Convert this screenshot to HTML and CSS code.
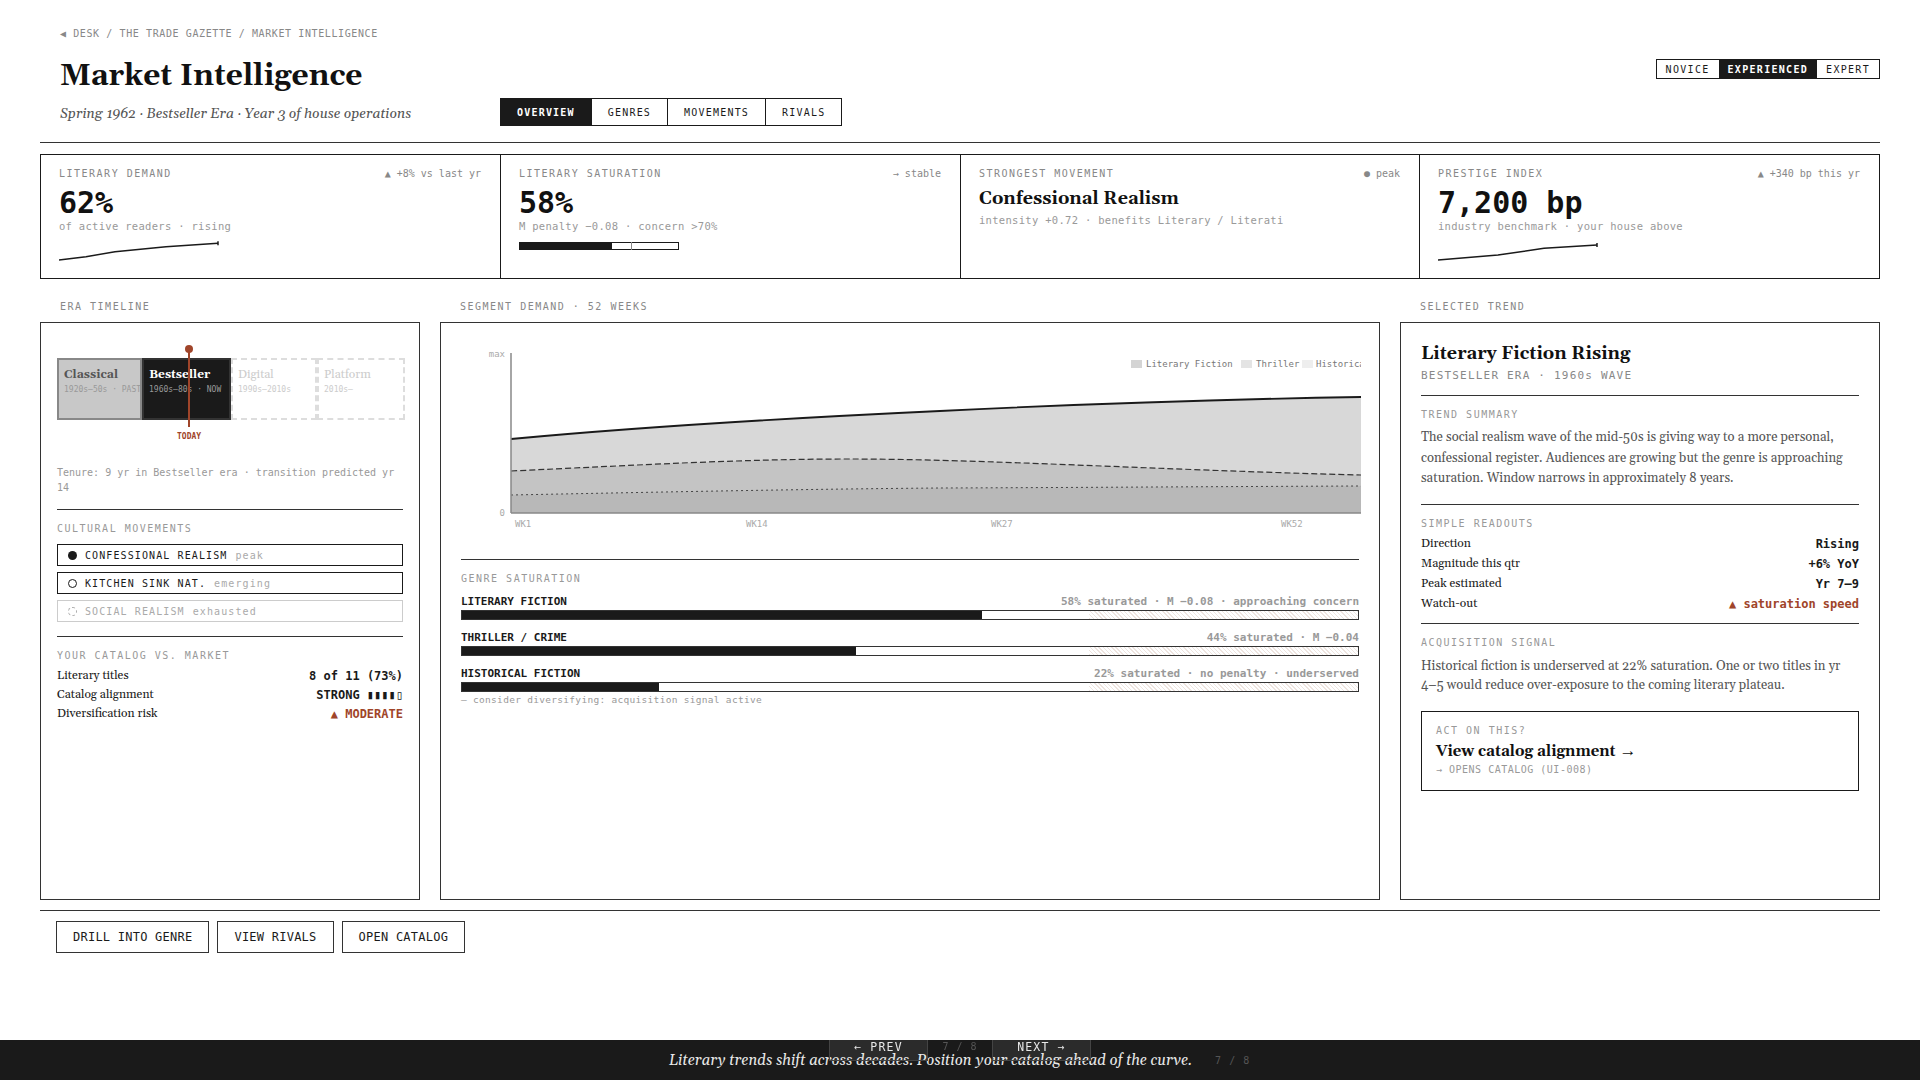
FILE: index.html
```html
<!DOCTYPE html>
<html lang="en">
<head>
<meta charset="utf-8">
<title>Market Intelligence</title>
<link rel="stylesheet" href="styles.css">
</head>
<body>
<div class="app">
  <header class="head">
    <div class="crumb">◀ DESK / THE TRADE GAZETTE / MARKET INTELLIGENCE</div>
    <div class="head-row">
      <div class="head-main">
        <h1 class="title">Market Intelligence</h1>
        <div class="sub-row">
          <div class="subtitle">Spring 1962 · Bestseller Era · Year 3 of house operations</div>
          <nav class="tabs">
            <span class="tab tab-on">OVERVIEW</span>
            <span class="tab">GENRES</span>
            <span class="tab">MOVEMENTS</span>
            <span class="tab">RIVALS</span>
          </nav>
        </div>
      </div>
      <div class="level">
        <span class="lvl">NOVICE</span>
        <span class="lvl lvl-on">EXPERIENCED</span>
        <span class="lvl">EXPERT</span>
      </div>
    </div>
  </header>

  <section class="kpis">
    <div class="kpi">
      <div class="kpi-top"><span class="kpi-label">LITERARY DEMAND</span><span class="kpi-delta">▲ +8% vs last yr</span></div>
      <div class="kpi-val">62%</div>
      <div class="kpi-sub">of active readers · rising</div>
      <svg class="spark" width="162" height="20" viewBox="0 0 162 20"><polyline points="0,19 27,15.7 56,10.7 107,5.7 159,2.3" fill="none" stroke="#1a1a1a" stroke-width="1.5"/><line x1="159" y1="0.3" x2="159" y2="4.3" stroke="#1a1a1a" stroke-width="1.5"/></svg>
    </div>
    <div class="kpi">
      <div class="kpi-top"><span class="kpi-label">LITERARY SATURATION</span><span class="kpi-delta">→ stable</span></div>
      <div class="kpi-val">58%</div>
      <div class="kpi-sub">M penalty −0.08 · concern &gt;70%</div>
      <div class="minibar"><div class="minibar-fill"></div><div class="minibar-tick"></div></div>
    </div>
    <div class="kpi">
      <div class="kpi-top"><span class="kpi-label">STRONGEST MOVEMENT</span><span class="kpi-delta">● peak</span></div>
      <div class="kpi-name">Confessional Realism</div>
      <div class="kpi-sub kpi-sub-name">intensity +0.72 · benefits Literary / Literati</div>
    </div>
    <div class="kpi">
      <div class="kpi-top"><span class="kpi-label">PRESTIGE INDEX</span><span class="kpi-delta">▲ +340 bp this yr</span></div>
      <div class="kpi-val">7,200 bp</div>
      <div class="kpi-sub">industry benchmark · your house above</div>
      <svg class="spark" width="162" height="20" viewBox="0 0 162 20"><polyline points="0,19 60,14 106,7.3 159,4" fill="none" stroke="#1a1a1a" stroke-width="1.5"/><line x1="159" y1="2" x2="159" y2="6" stroke="#1a1a1a" stroke-width="1.5"/></svg>
    </div>
  </section>

  <main class="cols">
    <div class="col">
      <div class="col-label">ERA TIMELINE</div>
      <div class="panel panel-left">
        <div class="eras">
          <div class="era era-past"><div class="era-name">Classical</div><div class="era-date">1920s–50s · PAST</div></div>
          <div class="era era-now"><div class="era-name">Bestseller</div><div class="era-date">1960s–80s · NOW</div></div>
          <div class="era era-next era-digital"><div class="era-name">Digital</div><div class="era-date">1990s–2010s</div></div>
          <div class="era era-next era-platform"><div class="era-name">Platform</div><div class="era-date">2010s–</div></div>
          <div class="today"><span class="today-dot"></span><span class="today-line"></span><span class="today-text">TODAY</span></div>
        </div>
        <div class="tenure">Tenure: 9 yr in Bestseller era · transition predicted yr 14</div>
        <div class="rule rule-a"></div>
        <div class="sec-label">CULTURAL MOVEMENTS</div>
        <div class="chips">
          <div class="chip"><span class="dot dot-full"></span><span class="chip-name">CONFESSIONAL REALISM</span><span class="chip-state">peak</span></div>
          <div class="chip"><span class="dot dot-open"></span><span class="chip-name">KITCHEN SINK NAT.</span><span class="chip-state">emerging</span></div>
          <div class="chip chip-dim"><span class="dot dot-dash"></span><span class="chip-name">SOCIAL REALISM</span><span class="chip-state">exhausted</span></div>
        </div>
        <div class="rule rule-b"></div>
        <div class="sec-label">YOUR CATALOG VS. MARKET</div>
        <div class="rows rows-left">
          <div class="row"><span class="row-key">Literary titles</span><span class="row-val">8 of 11 (73%)</span></div>
          <div class="row"><span class="row-key">Catalog alignment</span><span class="row-val">STRONG ▮▮▮▮▯</span></div>
          <div class="row"><span class="row-key">Diversification risk</span><span class="row-val row-warn">▲ MODERATE</span></div>
        </div>
      </div>
    </div>

    <div class="col">
      <div class="col-label">SEGMENT DEMAND · 52 WEEKS</div>
      <div class="panel panel-mid">
        <svg class="chart" width="900" height="200" viewBox="0 0 900 200">
          <path d="M50,96 C200,82 350,74 479,68 C620,61 770,56 900,54 L900,170 L50,170 Z" fill="#d8d8d8"/>
          <path d="M50,128 C180,122 280,116 389,116 C520,116 700,127 900,132 L900,170 L50,170 Z" fill="#c4c4c4"/>
          <path d="M50,152 C200,149 350,146 479,145 C620,144.5 770,143.5 900,143 L900,170 L50,170 Z" fill="#b8b8b8"/>
          <path d="M50,96 C200,82 350,74 479,68 C620,61 770,56 900,54" fill="none" stroke="#1a1a1a" stroke-width="1.8"/>
          <path d="M50,128 C180,122 280,116 389,116 C520,116 700,127 900,132" fill="none" stroke="#333" stroke-width="1.2" stroke-dasharray="6 3"/>
          <path d="M50,152 C200,149 350,146 479,145 C620,144.5 770,143.5 900,143" fill="none" stroke="#444" stroke-width="1" stroke-dasharray="2 3"/>
          <line x1="50" y1="10" x2="50" y2="170" stroke="#888" stroke-width="1.5"/>
          <line x1="50" y1="170" x2="900" y2="170" stroke="#888" stroke-width="1.5"/>
          <text class="ct ct-end" x="44" y="14">max</text>
          <text class="ct ct-end" x="44" y="173">0</text>
          <text class="ct" x="54" y="184">WK1</text>
          <text class="ct" x="285" y="184">WK14</text>
          <text class="ct" x="530" y="184">WK27</text>
          <text class="ct" x="820" y="184">WK52</text>
          <rect x="670" y="17" width="11" height="8" fill="#d4d4d4"/>
          <text class="cl" x="685" y="24">Literary Fiction</text>
          <rect x="780" y="17" width="11" height="8" fill="#e4e4e4"/>
          <text class="cl" x="795" y="24">Thriller</text>
          <rect x="841" y="17" width="11" height="8" fill="#eeeeee"/>
          <text class="cl" x="855" y="24">Historical</text>
        </svg>
        <div class="rule rule-c"></div>
        <div class="sec-label sec-genre">GENRE SATURATION</div>
        <div class="genre">
          <div class="genre-top"><span class="genre-name">LITERARY FICTION</span><span class="genre-note">58% saturated · M −0.08 · approaching concern</span></div>
          <div class="gbar"><div class="gbar-hatch"></div><div class="gbar-fill" style="width:58%"></div></div>
        </div>
        <div class="genre">
          <div class="genre-top"><span class="genre-name">THRILLER / CRIME</span><span class="genre-note">44% saturated · M −0.04</span></div>
          <div class="gbar"><div class="gbar-hatch"></div><div class="gbar-fill" style="width:44%"></div></div>
        </div>
        <div class="genre">
          <div class="genre-top"><span class="genre-name">HISTORICAL FICTION</span><span class="genre-note">22% saturated · no penalty · underserved</span></div>
          <div class="gbar"><div class="gbar-hatch"></div><div class="gbar-fill" style="width:22%"></div></div>
        </div>
        <div class="genre-foot">— consider diversifying: acquisition signal active</div>
      </div>
    </div>

    <div class="col">
      <div class="col-label">SELECTED TREND</div>
      <div class="panel panel-right">
        <h2 class="trend-title">Literary Fiction Rising</h2>
        <div class="trend-sub">BESTSELLER ERA · 1960s WAVE</div>
        <div class="rule rule-d"></div>
        <div class="sec-label">TREND SUMMARY</div>
        <p class="para para-a">The social realism wave of the mid-50s is giving way to a more personal, confessional register. Audiences are growing but the genre is approaching saturation. Window narrows in approximately 8 years.</p>
        <div class="rule rule-e"></div>
        <div class="sec-label">SIMPLE READOUTS</div>
        <div class="rows rows-right">
          <div class="row"><span class="row-key">Direction</span><span class="row-val">Rising</span></div>
          <div class="row"><span class="row-key">Magnitude this qtr</span><span class="row-val">+6% YoY</span></div>
          <div class="row"><span class="row-key">Peak estimated</span><span class="row-val">Yr 7–9</span></div>
          <div class="row"><span class="row-key">Watch-out</span><span class="row-val row-warn">▲ saturation speed</span></div>
        </div>
        <div class="rule rule-f"></div>
        <div class="sec-label">ACQUISITION SIGNAL</div>
        <p class="para para-b">Historical fiction is underserved at 22% saturation. One or two titles in yr 4–5 would reduce over-exposure to the coming literary plateau.</p>
        <div class="cta">
          <div class="cta-kicker">ACT ON THIS?</div>
          <div class="cta-main">View catalog alignment <span class="cta-arrow">→</span></div>
          <div class="cta-sub">→ OPENS CATALOG (UI-008)</div>
        </div>
      </div>
    </div>
  </main>

  <div class="actions">
    <span class="btn">DRILL INTO GENRE</span>
    <span class="btn">VIEW RIVALS</span>
    <span class="btn">OPEN CATALOG</span>
  </div>
</div>

<footer class="foot">
  <span class="foot-text">Literary trends shift across decades. Position your catalog ahead of the curve.</span>
  <span class="foot-count">7 / 8</span>
</footer>
<div class="pager">
  <span class="pg">← PREV</span>
  <span class="pg-count">7 / 8</span>
  <span class="pg">NEXT →</span>
</div>
</body>
</html>
```
FILE: styles.css
```css
* { box-sizing: border-box; margin: 0; padding: 0; }
html, body { width: 1920px; height: 1080px; overflow: hidden; background: #fff; }
body { font-family: "DejaVu Sans Mono", monospace; color: #1a1a1a; }
.app { padding: 0 40px; }

.head { padding: 28px 0 0 20px; height: 143px; border-bottom: 1px solid #333; }
.crumb { font-size: 10px; line-height: 12px; letter-spacing: 0.6px; color: #888; }
.head-row { display: flex; justify-content: space-between; }
.head-main { padding-top: 16px; }
.title { font-family: Georgia, Gelasio, "Liberation Serif", serif; font-size: 30px; line-height: 40px; font-weight: 700; color: #111; }
.sub-row { display: flex; align-items: center; margin-top: 2px; }
.subtitle { width: 440px; padding-top: 4px; font-family: Georgia, Gelasio, "Liberation Serif", serif; font-style: italic; font-size: 14px; color: #555; }
.tabs { display: flex; border: 1px solid #1a1a1a; height: 28px; }
.tab { display: flex; align-items: center; padding: 0 16px; font-size: 10px; letter-spacing: 1.2px; border-left: 1px solid #1a1a1a; }
.tab:first-child { border-left: 0; }
.tab-on { background: #1a1a1a; color: #fff; font-weight: 700; }
.level { display: flex; align-self: flex-start; margin-top: 19px; height: 20px; border: 1px solid #1a1a1a; }
.lvl { display: flex; align-items: center; padding: 0 9px; font-size: 10px; letter-spacing: 1.3px; }
.lvl-on { background: #1a1a1a; color: #fff; font-weight: 700; }

.kpis { display: grid; grid-template-columns: 460px 460px 459px 1fr; height: 125px; margin-top: 11px; border: 1px solid #1a1a1a; }
.kpi { padding: 12px 19px 0 18px; border-right: 1px solid #1a1a1a; }
.kpi:last-child { border-right: 0; }
.kpi-top { display: flex; justify-content: space-between; line-height: 13px; }
.kpi-label { font-size: 10px; letter-spacing: 1.5px; color: #888; }
.kpi-delta { font-size: 10px; color: #888; }
.kpi-val { margin-top: 6px; font-size: 30px; line-height: 34px; font-weight: 700; color: #111; }
.kpi-sub { margin-top: -1px; font-size: 10.5px; line-height: 14px; letter-spacing: 0.3px; color: #999; }
.kpi-name { margin-top: 6px; font-family: Georgia, Gelasio, "Liberation Serif", serif; font-size: 18px; line-height: 26px; font-weight: 700; color: #111; }
.kpi-sub-name { margin-top: 1px; }
.spark { display: block; margin-top: 8px; }
.minibar { position: relative; width: 160px; height: 8px; margin-top: 9px; border: 1px solid #1a1a1a; }
.minibar-fill { width: 58%; height: 100%; background: #1a1a1a; }
.minibar-tick { position: absolute; left: 70%; top: -1px; bottom: -1px; width: 1px; background: #888; }

.cols { display: grid; grid-template-columns: 380px 940px 480px; gap: 20px; margin-top: 20px; }
.col-label { padding: 1px 0 0 20px; height: 23px; font-size: 10px; line-height: 14px; letter-spacing: 1.5px; color: #888; }
.panel { height: 578px; border: 1px solid #333; }
.panel-left { padding: 20px 16px; }
.panel-mid { padding: 20px 20px; }
.panel-right { padding: 20px 20px; }

.eras { position: relative; display: flex; height: 62px; margin-top: 15px; }
.era { flex: none; padding: 7px 5px; border: 2px solid #888; overflow: hidden; white-space: nowrap; }
.era-past { width: 85px; background: #c8c8c8; color: #555; }
.era-now { width: 89px; background: #1a1a1a; color: #fff; border-color: #333; }
.era-next { color: #ccc; border: 2px dashed #ddd; }
.era-digital { width: 86px; }
.era-platform { width: 88px; }
.era-name { font-family: Georgia, Gelasio, "Liberation Serif", serif; font-size: 12px; line-height: 16px; font-weight: 700; }
.era-next .era-name { font-weight: 400; }
.era-date { font-size: 8px; line-height: 13px; color: #999; }
.era-next .era-date { color: #ccc; }
.today { position: absolute; left: 127px; top: -9px; width: 10px; }
.today-dot { position: absolute; left: 1px; top: -4px; width: 8px; height: 8px; border-radius: 50%; background: #a0452a; }
.today-line { position: absolute; left: 4px; top: 0; width: 2px; height: 78px; background: #a0452a; }
.today-text { position: absolute; left: -7px; top: 83px; width: 24px; font-size: 8px; line-height: 10px; font-weight: 700; color: #a0452a; }
.tenure { margin-top: 45px; font-size: 10px; line-height: 15px; color: #999; }

.rule { height: 0; border-top: 1px solid #333; }
.rule-a { margin-top: 14px; }
.sec-label { font-size: 10px; line-height: 12px; letter-spacing: 1.5px; color: #999; }
.rule-a + .sec-label { margin-top: 13px; }
.chips { display: flex; flex-direction: column; gap: 6px; margin-top: 9px; }
.chip { display: flex; align-items: center; height: 22px; padding-left: 10px; border: 1px solid #1a1a1a; font-size: 10px; letter-spacing: 1.1px; }
.chip-name { color: #1a1a1a; }
.chip-state { margin-left: 8px; color: #aaa; }
.chip-dim { border-color: #ccc; }
.chip-dim .chip-name { color: #aaa; }
.dot { flex: none; width: 9px; height: 9px; margin-right: 8px; border-radius: 50%; }
.dot-full { background: #1a1a1a; }
.dot-open { border: 1.5px solid #1a1a1a; }
.dot-dash { border: 1px dashed #aaa; }
.rule-b { margin-top: 14px; }
.rule-b + .sec-label { margin-top: 13px; }
.rows { display: flex; flex-direction: column; }
.rows-left { margin-top: 4px; }
.row { display: flex; justify-content: space-between; align-items: center; height: 19px; }
.row-key { font-family: Georgia, Gelasio, "Liberation Serif", serif; font-size: 12px; color: #1a1a1a; }
.row-val { font-size: 12px; font-weight: 700; color: #1a1a1a; }
.row-warn { color: #a0452a; }

.chart { display: block; width: 900px; height: 200px; margin-bottom: 16px; }
.ct { font-family: "DejaVu Sans Mono", monospace; font-size: 9px; fill: #aaa; }
.ct-end { text-anchor: end; }
.cl { font-family: "DejaVu Sans Mono", monospace; font-size: 9px; fill: #777; }
.rule-c { width: 898px; }
.sec-genre { margin-top: 13px; margin-bottom: -1px; }
.genre { margin-top: 10px; }
.genre-top { display: flex; justify-content: space-between; line-height: 15px; font-size: 11px; font-weight: 700; }
.genre-note { color: #999; }
.gbar { position: relative; height: 10px; margin-top: 1px; border: 1px solid #333; }
.gbar-fill { position: absolute; left: 0; top: 0; bottom: 0; background: #1a1a1a; }
.gbar-hatch { position: absolute; left: 70%; right: 0; top: 0; bottom: 0; background: repeating-linear-gradient(45deg, #eee4df 0, #eee4df 1px, #fff 1px, #fff 3px); }
.genre-foot { margin-top: 1px; font-size: 9.5px; line-height: 13px; letter-spacing: 0.3px; color: #999; }

.trend-title { font-family: Georgia, Gelasio, "Liberation Serif", serif; font-size: 18px; line-height: 22px; font-weight: 700; color: #111; }
.trend-sub { margin-top: 4px; font-size: 11px; line-height: 14px; letter-spacing: 1.2px; color: #888; }
.rule-d { margin-top: 12px; }
.rule-d + .sec-label { margin-top: 13px; }
.para { font-family: Georgia, Gelasio, "Liberation Serif", serif; font-size: 13px; color: #555; }
.para-a { margin-top: 6px; line-height: 20.5px; }
.rule-e { margin-top: 15px; }
.rule-e + .sec-label { margin-top: 13px; }
.rows-right { margin-top: 4px; }
.rows-right .row { height: 20px; }
.rule-f { margin-top: 9px; }
.rule-f + .sec-label { margin-top: 13px; }
.para-b { margin-top: 8px; line-height: 19.5px; }
.cta { height: 80px; margin-top: 15px; padding: 13px 14px; border: 1px solid #1a1a1a; }
.cta-kicker { font-size: 10px; line-height: 12px; letter-spacing: 1.5px; color: #999; }
.cta-main { margin-top: 3px; font-family: Georgia, Gelasio, "Liberation Serif", serif; font-size: 15px; line-height: 22px; font-weight: 700; color: #111; }
.cta-arrow { font-family: "Liberation Serif", serif; font-weight: 400; font-size: 17px; }
.cta-sub { font-size: 10px; line-height: 14px; letter-spacing: 0.5px; color: #999; }

.actions { display: flex; gap: 8px; height: 44px; margin-top: 10px; padding: 10px 0 0 16px; border-top: 1px solid #333; }
.btn { display: flex; align-items: center; height: 32px; padding: 0 16px; border: 1px solid #333; font-size: 12px; letter-spacing: 0.24px; color: #1a1a1a; }

.foot { position: fixed; left: 0; right: 0; bottom: 0; height: 40px; padding: 1px 0 0 669px; display: flex; align-items: center; background: #1a1a1a; }
.foot-text { font-family: Georgia, Gelasio, "Liberation Serif", serif; font-style: italic; font-size: 15px; color: #e8e8e8; }
.foot-count { margin-left: 23px; font-size: 10px; letter-spacing: 1px; color: #555; }
.pager { position: fixed; left: 829px; top: 1040px; display: flex; align-items: flex-start; height: 21px; }
.pg { display: flex; justify-content: center; width: 99px; height: 21px; border: 1px solid #444; border-top: 0; background: rgba(255,255,255,0.08); font-size: 11.5px; line-height: 14px; letter-spacing: 1.2px; color: #e8e8e8; }
.pg-count { width: 64px; text-align: center; font-size: 10px; line-height: 14px; letter-spacing: 1px; color: #555; }
```
